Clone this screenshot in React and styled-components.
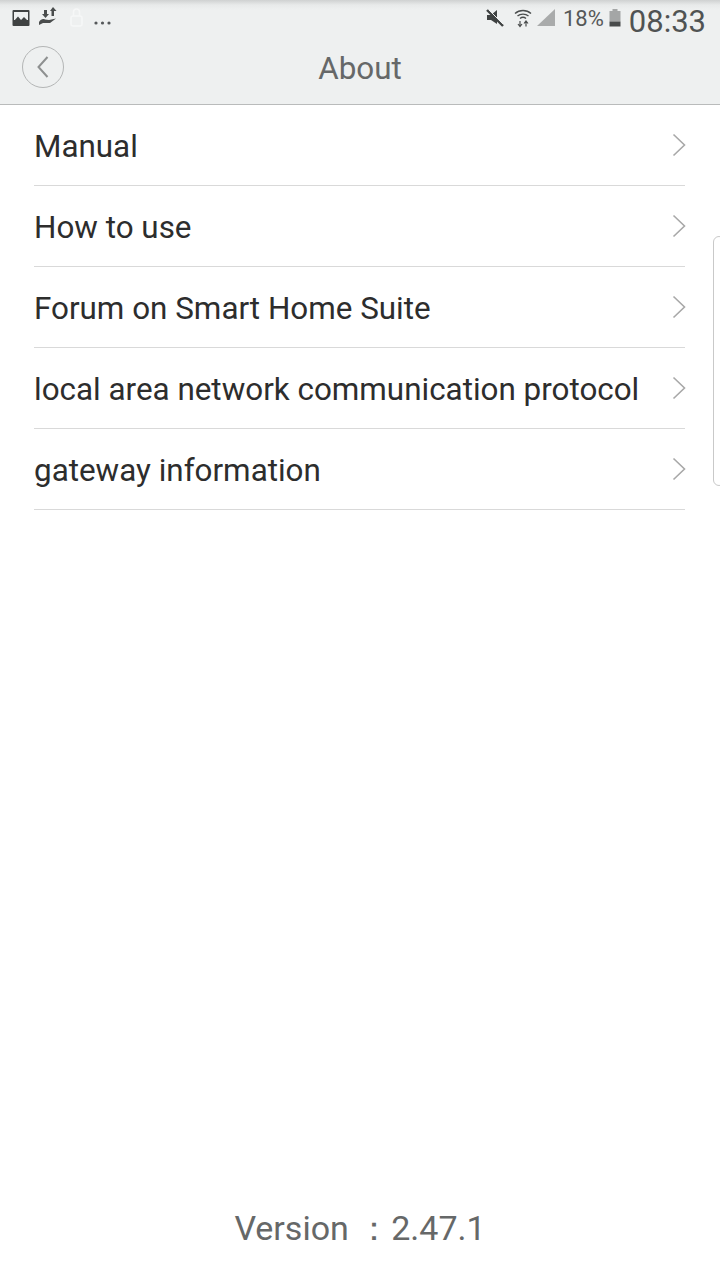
import React from "react";
import styled, { createGlobalStyle } from "styled-components";

const Global = createGlobalStyle`
  html, body { margin: 0; padding: 0; background: #fff; }
  body { font-family: Roboto, "Noto Sans", sans-serif; }
`;

const Page = styled.div`
  position: relative;
  width: 720px;
  height: 1280px;
  display: flex;
  flex-direction: column;
  background: #fff;
  overflow: hidden;
`;

const Header = styled.header`
  height: 104px;
  flex: none;
  background: linear-gradient(#cfd1d1 0, #e8eaea 5px, #eef0f0 10px);
  border-bottom: 1px solid #b9bbbb;
  display: flex;
  flex-direction: column;
`;

const StatusBar = styled.div`
  height: 36px;
  flex: none;
  display: flex;
  align-items: center;
  justify-content: space-between;
  padding: 0 14px 0 12px;
  color: #4f5252;
`;

const StatusGroup = styled.div`
  display: flex;
  align-items: center;
`;

const StatusIcon = styled.svg`
  flex: none;
  margin-right: ${(p) => p.$gap || 0}px;
  margin-top: ${(p) => p.$drop || 0}px;
`;

const Percent = styled.span`
  font-size: 22px;
  margin: 0 5px 0 8px;
  color: #565858;
`;

const Clock = styled.span`
  font-size: 31px;
  margin-left: 8px;
  line-height: 36px;
  padding-top: 8px;
  color: #505353;
`;

const NavBar = styled.div`
  flex: 1;
  display: flex;
  align-items: center;
  justify-content: center;
  position: relative;
  padding-bottom: 8px;
`;

const BackButton = styled.button`
  position: absolute;
  left: 22px;
  top: 10px;
  width: 42px;
  height: 42px;
  padding: 0;
  border: 1px solid #b4b6b6;
  border-radius: 50%;
  background: transparent;
  display: flex;
  align-items: center;
  justify-content: center;
`;

const BackGlyph = styled.svg`
  fill: none;
  stroke: #8e9090;
  stroke-width: 2;
`;

const Title = styled.h1`
  margin: 4px 0 0;
  font-size: 31.4px;
  font-weight: 400;
  color: #666868;
`;

const List = styled.ul`
  list-style: none;
  margin: 0;
  padding: 0 35px 0 34px;
`;

const Row = styled.li`
  height: 80px;
  display: flex;
  align-items: center;
  justify-content: space-between;
  border-bottom: 1px solid #d9d9d9;
`;

const RowLabel = styled.span`
  font-size: 31.4px;
  color: #2d2d2d;
  margin-top: 2px;
`;

const Chevron = styled.svg`
  flex: none;
  margin-right: -1px;
  fill: none;
  stroke: #a8a8a8;
  stroke-width: 1.6;
`;

const Footer = styled.footer`
  margin-top: auto;
  height: 71px;
  text-align: center;
  font-size: 34px;
  line-height: 38px;
  color: #666868;
  white-space: pre;
`;

const EdgeHandle = styled.div`
  position: absolute;
  left: 713px;
  top: 236px;
  width: 12px;
  height: 250px;
  box-sizing: border-box;
  border: 1px solid #c9c9c9;
  border-radius: 8px;
  background: #fff;
`;

const rows = [
  "Manual",
  "How to use",
  "Forum on Smart Home Suite",
  "local area network communication protocol",
  "gateway information",
];

export default function App() {
  return (
    <Page>
      <Global />
      <Header>
        <StatusBar>
          <StatusGroup>
            <StatusIcon width="18" height="18" viewBox="0 0 18 18" $gap={8}>
              <rect x="0.5" y="1" width="17" height="16" rx="1" fill="#3f4242" />
              <rect x="2" y="3" width="14" height="8" fill="#eef0f0" />
              <path d="M2 15 L2 12 L6 7.5 L9 11 L12 8 L16 12 L16 15 Z" fill="#3f4242" />
            </StatusIcon>
            <StatusIcon width="20" height="20" viewBox="0 0 20 20" fill="#4a4d4d" $gap={11} $drop={-4}>
              <path d="M6 4h3v4h2l-3.500 4L4 8h2z" />
              <path d="M15 1l3.500 4H16v5h-2.500V5H12z" />
              <path d="M1 16c2-3 4-3.500 6-2.500l4 .5 7-1.500-6 4.500H5l-4 2z" />
            </StatusIcon>
            <StatusIcon width="16" height="20" viewBox="0 0 16 20" fill="none" stroke="#f6f7f7" strokeWidth="1.500" $gap={9}>
              <rect x="2" y="8" width="11" height="10" rx="2" />
              <path d="M4.500 8V4a3 3 0 0 1 6 0v4" />
            </StatusIcon>
            <StatusIcon width="17" height="6" viewBox="0 0 17 6" fill="#55585a" $drop={10}>
              <circle cx="2" cy="3" r="1.600" />
              <circle cx="8.500" cy="3" r="1.600" />
              <circle cx="15" cy="3" r="1.600" />
            </StatusIcon>
          </StatusGroup>
          <StatusGroup>
            <StatusIcon width="18" height="18" viewBox="0 0 18 18" $gap={10}>
              <path d="M1 6h4l6-5v14l-6-4H1z" fill="#3f4242" />
              <path d="M1 1 L17 17" stroke="#3f4242" strokeWidth="2.400" />
              <path d="M3 1 L17 15" stroke="#eef0f0" strokeWidth="1" />
            </StatusIcon>
            <StatusIcon width="18" height="20" viewBox="0 0 18 20" fill="none" stroke="#4a4d4d" strokeWidth="1.400" $gap={5}>
              <path d="M1 5.500C5.500 1.500 12.500 1.500 17 5.500" />
              <path d="M3.500 8C6.500 5.500 11.500 5.500 14.500 8" />
              <path d="M6 10.500C7.800 9 10.200 9 12 10.500" />
              <path d="M6 13v5M4 16l2 2.500L8 16M12 18.500v-5M10 15.500l2-2.500 2 2.500" strokeWidth="1.200" />
            </StatusIcon>
            <StatusIcon width="18" height="18" viewBox="0 0 18 18">
              <path d="M0 17 L18 0 L18 17 Z" fill="#a9abab" />
            </StatusIcon>
            <Percent>18%</Percent>
            <StatusIcon width="12" height="18" viewBox="0 0 12 18">
              <rect x="3.500" y="0" width="5" height="2" fill="#a4a6a6" />
              <rect x="0.500" y="2" width="11" height="10.500" fill="#a4a6a6" />
              <rect x="0.500" y="12.500" width="11" height="5" fill="#484b4b" />
            </StatusIcon>
            <Clock>08:33</Clock>
          </StatusGroup>
        </StatusBar>
        <NavBar>
          <BackButton aria-label="Back">
            <BackGlyph width="12" height="22" viewBox="0 0 12 22">
              <path d="M10.500 1 L1.500 11 L10.500 21" />
            </BackGlyph>
          </BackButton>
          <Title>About</Title>
        </NavBar>
      </Header>
      <List>
        {rows.map((r) => (
          <Row key={r}>
            <RowLabel>{r}</RowLabel>
            <Chevron width="14" height="24" viewBox="0 0 14 24">
              <path d="M1.500 1.500 L12.500 12 L1.500 22.500" />
            </Chevron>
          </Row>
        ))}
      </List>
      <Footer>{"Version ：2.47.1"}</Footer>
      <EdgeHandle />
    </Page>
  );
}
